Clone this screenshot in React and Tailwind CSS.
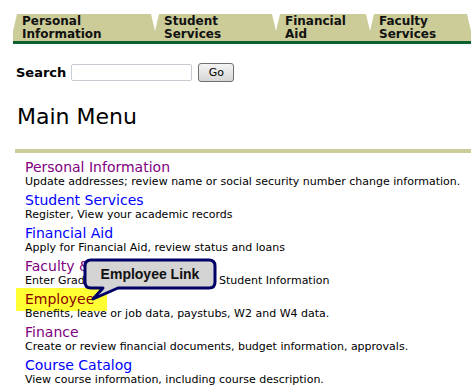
const tabs = [
  { top: "Personal", bottom: "Information", w: "w-[142px]" },
  { top: "Student", bottom: "Services", w: "w-[121px]" },
  { top: "Financial", bottom: "Aid", w: "w-[94px]" },
  { top: "Faculty", bottom: "Services", w: "flex-1" },
];

const items = [
  { label: "Personal Information", color: "text-[#800080]", desc: "Update addresses; review name or social security number change information." },
  { label: "Student Services", color: "text-[#0000ff]", desc: "Register, View your academic records" },
  { label: "Financial Aid", color: "text-[#0000ff]", desc: "Apply for Financial Aid, review status and loans" },
  { label: "Faculty & Advisors", color: "text-[#800080]", desc: "Enter Grades, View Class Lists and Student Information" },
  { label: "Employee", color: "text-[#8b0000]", desc: "Benefits, leave or job data, paystubs, W2 and W4 data.", hl: true },
  { label: "Finance", color: "text-[#800080]", desc: "Create or review financial documents, budget information, approvals." },
  { label: "Course Catalog", color: "text-[#0000ff]", desc: "View course information, including course description." },
];

function Callout() {
  return (
    <div className="absolute left-[80px] top-[255px] h-[50px] w-[140px]">
      <svg width="140" height="50" className="absolute left-0 top-0">
        <path
          d="M11 5 H129 Q135 5 135 11 V27 Q135 33 129 33 H38 L13 44 L23 33 H11 Q5 33 5 27 V11 Q5 5 11 5 Z"
          fill="#d4d4d4"
          stroke="#000066"
          strokeWidth="3"
          strokeLinejoin="round"
        />
      </svg>
      <div className="absolute left-[5px] top-[5px] flex h-[28px] w-[130px] items-center justify-center font-['Liberation_Sans',sans-serif] text-[14px] font-bold text-[#111]">
        Employee Link
      </div>
    </div>
  );
}

export default function App() {
  return (
    <div className="relative h-[387px] w-[471px] overflow-hidden bg-white font-['DejaVu_Sans',sans-serif] text-black">
      <div className="ml-[13px] pt-[14px]">
        <div className="flex h-[27px]">
          {tabs.map((t) => (
            <div
              key={t.top + t.bottom}
              className={`${t.w} rounded-t-[5px] bg-[#cccc99] pl-[9px] pt-[1px] text-[12px] font-bold leading-[13px] text-[#111] [clip-path:polygon(4px_0,calc(100%-4px)_0,100%_17px,100%_100%,0_100%,0_17px)]`}
            >
              <div>{t.top}</div>
              <div>{t.bottom}</div>
            </div>
          ))}
        </div>
        <div className="h-[3px] bg-[#0f6030]" />
      </div>

      <div className="ml-[16px] mt-[19px] flex items-center">
        <span className="text-[13px] font-bold leading-[17px]">Search</span>
        <input className="ml-[5px] h-[17px] w-[121px] rounded-[2px] border border-[#c8cbd2] bg-white outline-none" />
        <button className="ml-[6px] h-[19px] w-[36px] rounded-[3px] border border-[#707070] bg-gradient-to-b from-[#f4f4f4] to-[#d6d6d6] text-[11px] leading-[15px]">
          Go
        </button>
      </div>

      <h1 className="ml-[17px] mt-[21px] text-[22px] font-normal leading-[27px]">Main Menu</h1>

      <div className="ml-[15px] mt-[19px] h-[4px] bg-[#cccc99]" />

      <div className="mt-[7px] flex flex-col">
        {items.map((it) => (
          <div key={it.label} className="mb-[5px]">
            <div className="flex">
              <span
                className={`ml-[16px] pl-[9px] ${it.hl ? "-my-[4px] w-[91px] bg-[#ffff33] py-[4px]" : ""} ${it.color} text-[14px] leading-[15px]`}
              >
                {it.label}
              </span>
            </div>
            <div className="relative pl-[25px] text-[11px] leading-[13px]">{it.desc}</div>
          </div>
        ))}
      </div>

      <Callout />
    </div>
  );
}
